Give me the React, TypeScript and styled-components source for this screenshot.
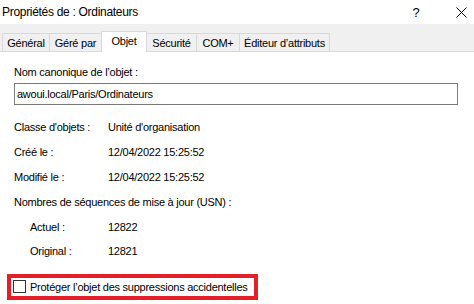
import React from "react";
import styled, { createGlobalStyle } from "styled-components";

const Global = createGlobalStyle`
  html, body { margin: 0; padding: 0; background: #ffffff; }
  body {
    font-family: "Liberation Sans", Arial, sans-serif;
    font-size: 11px;
    letter-spacing: -0.25px;
    color: #000;
    white-space: nowrap;
  }
`;

const Window = styled.div`
  width: 474px;
  height: 304px;
  background: #ffffff;
  display: flex;
  flex-direction: column;
  overflow: hidden;
`;

const TitleBar = styled.div`
  height: 24px;
  display: flex;
  align-items: center;
  justify-content: space-between;
  padding-left: 2px;
  padding-right: 1px;
  background: #ffffff;
`;

const Title = styled.span`
  font-size: 12px;
  letter-spacing: -0.3px;
  color: #000;
`;

const TitleButtons = styled.div`
  display: flex;
  align-items: center;
  height: 100%;
  gap: 23px;
`;

const HelpButton = styled.span`
  width: 20px;
  text-align: center;
  font-size: 13px;
  color: #000;
`;

const CloseButton = styled.span`
  width: 24px;
  display: flex;
  justify-content: center;
  align-items: center;
`;

const TabStrip = styled.div`
  height: 28px;
  background: #f0f0f0;
  display: flex;
  align-items: flex-end;
  padding-left: 3px;
  box-sizing: border-box;
  border-bottom: 1px solid #d9d9d9;
`;

const Tab = styled.div<{ $w: number; $active?: boolean }>`
  width: ${(p) => p.$w}px;
  height: ${(p) => (p.$active ? 21 : 18)}px;
  box-sizing: border-box;
  border: 1px solid #d9d9d9;
  border-bottom: none;
  margin-left: -1px;
  background: ${(p) => (p.$active ? "#ffffff" : "#f0f0f0")};
  margin-bottom: ${(p) => (p.$active ? -1 : 0)}px;
  display: flex;
  align-items: ${(p) => (p.$active ? "flex-start" : "center")};
  padding-top: ${(p) => (p.$active ? 3 : 0)}px;
  justify-content: center;
  position: relative;
  z-index: ${(p) => (p.$active ? 1 : 0)};
`;

const Content = styled.div`
  flex: 1;
  display: flex;
  flex-direction: column;
  padding: 12px 16px 0 14px;
`;

const FieldLabel = styled.div`
  height: 16px;
  line-height: 16px;
`;

const TextBox = styled.div`
  margin-top: 3px;
  height: 22px;
  box-sizing: border-box;
  border: 1px solid #7a7a7a;
  display: flex;
  align-items: center;
  padding-left: 2px;
`;

const Rows = styled.div`
  margin-top: 10px;
  display: flex;
  flex-direction: column;
`;

const Row = styled.div<{ $indent?: boolean }>`
  height: 24.8px;
  display: grid;
  grid-template-columns: ${(p) => (p.$indent ? "78px" : "94px")} 1fr;
  padding-left: ${(p) => (p.$indent ? 16 : 0)}px;
  align-items: center;
`;

const Highlight = styled.div`
  margin: 10px 0 0 -7px;
  width: 251px;
  height: 26px;
  box-sizing: border-box;
  border: 4px solid #e61e28;
  display: flex;
  align-items: center;
  padding-left: 2px;
  gap: 4px;
`;

const Check = styled.span`
  width: 13px;
  height: 13px;
  box-sizing: border-box;
  border: 1px solid #333333;
  background: #fff;
  flex-shrink: 0;
`;

const tabs: { label: string; w: number; active?: boolean }[] = [
  { label: "Général", w: 48 },
  { label: "Géré par", w: 53 },
  { label: "Objet", w: 46, active: true },
  { label: "Sécurité", w: 51 },
  { label: "COM+", w: 44 },
  { label: "Éditeur d\u2019attributs", w: 91 },
];

export default function App() {
  return (
    <>
      <Global />
      <Window>
        <TitleBar>
          <Title>Propriétés de : Ordinateurs</Title>
          <TitleButtons>
            <HelpButton>?</HelpButton>
            <CloseButton>
              <svg width="11" height="11" viewBox="0 0 11 11">
                <path d="M0.5 0.5 L10.5 10.5 M10.5 0.5 L0.5 10.5" stroke="#000" strokeWidth="1" fill="none" />
              </svg>
            </CloseButton>
          </TitleButtons>
        </TitleBar>
        <TabStrip>
          {tabs.map((t) => (
            <Tab key={t.label} $w={t.w} $active={t.active}>
              {t.label}
            </Tab>
          ))}
        </TabStrip>
        <Content>
          <FieldLabel>Nom canonique de l’objet :</FieldLabel>
          <TextBox>awoui.local/Paris/Ordinateurs</TextBox>
          <Rows>
            <Row>
              <span>Classe d'objets :</span>
              <span>Unité d'organisation</span>
            </Row>
            <Row>
              <span>Créé le :</span>
              <span>12/04/2022 15:25:52</span>
            </Row>
            <Row>
              <span>Modifié le :</span>
              <span>12/04/2022 15:25:52</span>
            </Row>
            <Row>
              <span>Nombres de séquences de mise à jour (USN) :</span>
            </Row>
            <Row $indent>
              <span>Actuel :</span>
              <span>12822</span>
            </Row>
            <Row $indent>
              <span>Original :</span>
              <span>12821</span>
            </Row>
          </Rows>
          <Highlight>
            <Check />
            <span>Protéger l’objet des suppressions accidentelles</span>
          </Highlight>
        </Content>
      </Window>
    </>
  );
}
